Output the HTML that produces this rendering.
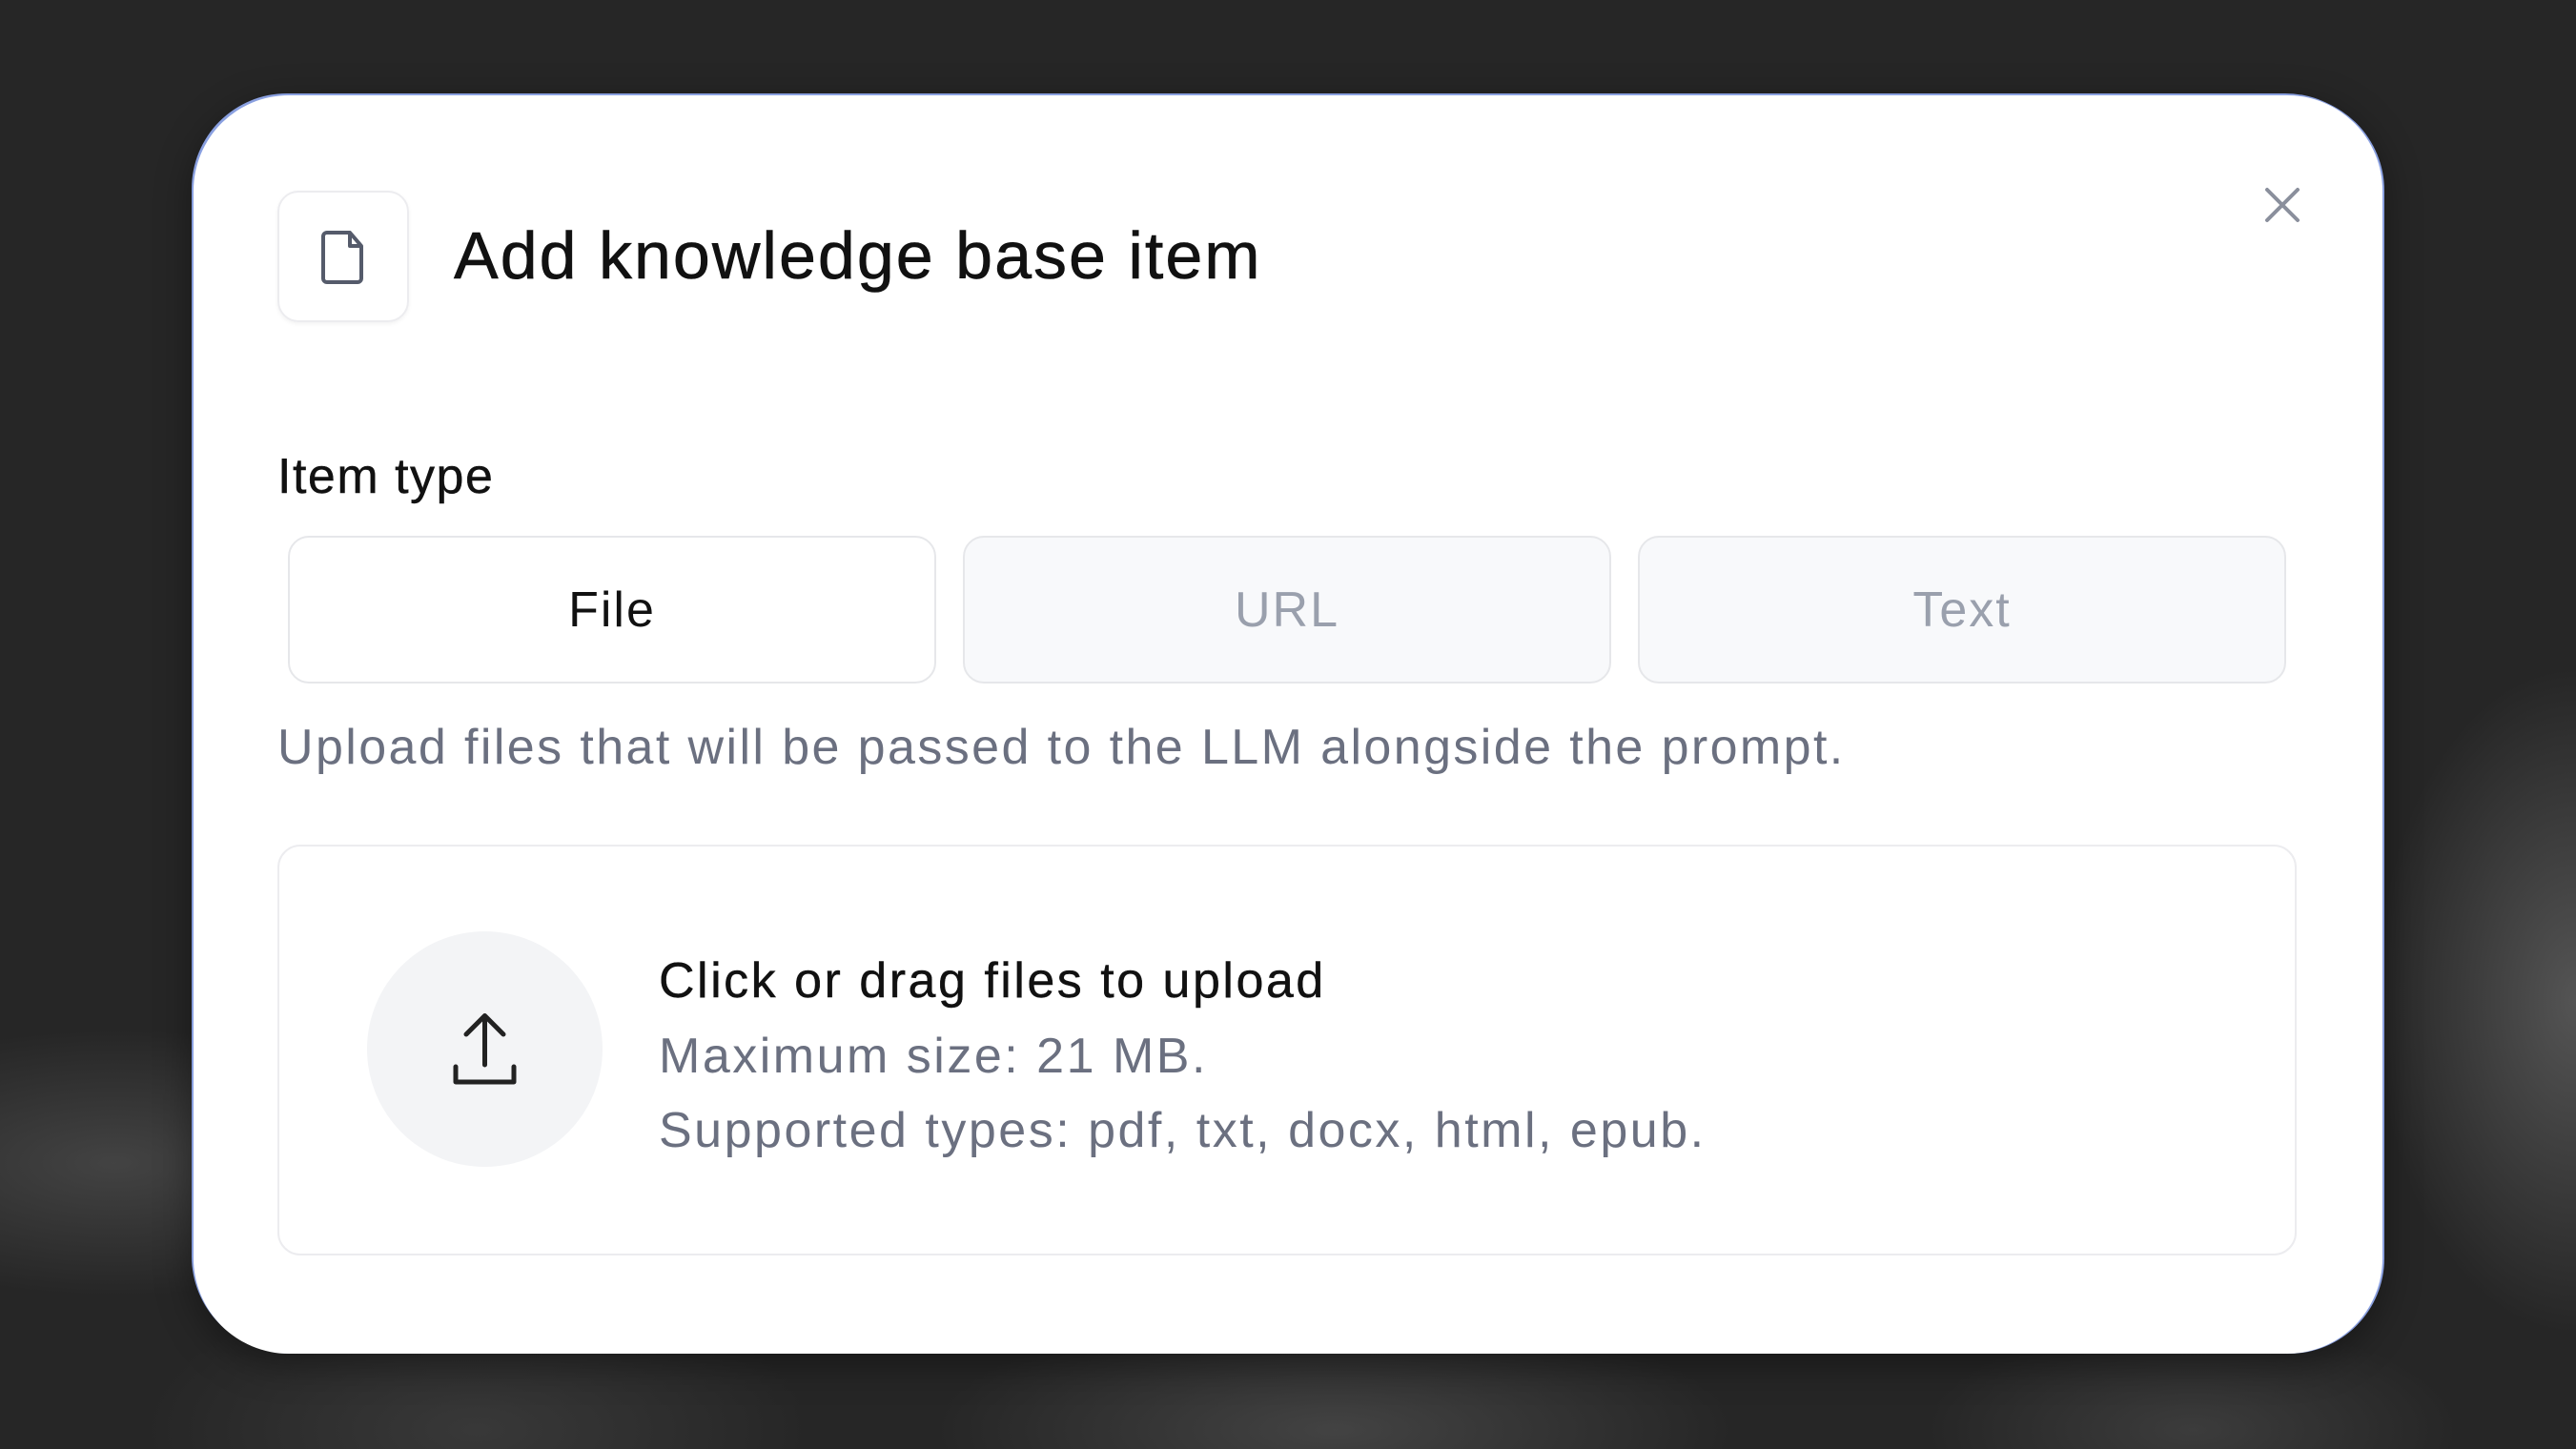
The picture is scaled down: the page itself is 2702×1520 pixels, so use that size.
<!DOCTYPE html>
<html><head><meta charset="utf-8"><style>
html,body{margin:0;padding:0}
body{width:2702px;height:1520px;position:relative;overflow:hidden;background:#262626;font-family:"Liberation Sans",sans-serif;
background-image:
radial-gradient(ellipse 300px 500px at 2702px 1050px,rgba(130,130,130,.5),transparent 70%),
radial-gradient(ellipse 500px 200px at 120px 1220px,rgba(110,110,110,.4),transparent 70%),
radial-gradient(ellipse 600px 180px at 1400px 1500px,rgba(110,110,110,.4),transparent 70%),
radial-gradient(ellipse 400px 160px at 2300px 1500px,rgba(110,110,110,.3),transparent 70%),
radial-gradient(ellipse 500px 220px at 500px 1500px,rgba(90,90,90,.35),transparent 70%);}
.modal{position:absolute;left:203px;top:100px;width:2296px;height:1320px;background:#fff;border-radius:100px;box-shadow:-2px -2px 0 #8aa0e0, 2px 0 0 #8aa0e0,0 10px 40px rgba(0,0,0,.4)}
.icon{position:absolute;left:88px;top:100px;width:134px;height:134px;border:2px solid #ececef;border-radius:22px;box-shadow:0 2px 4px rgba(0,0,0,.05)}
.title{position:absolute;left:273px;top:128px;font-size:70px;color:#111;line-height:80px;letter-spacing:2px;-webkit-text-stroke:0.6px #111}
.close{position:absolute;left:2171px;top:95px}
.label{position:absolute;left:88px;top:370px;font-size:52px;color:#111;line-height:60px;letter-spacing:1.5px;-webkit-text-stroke:0.4px #111}
.btn{position:absolute;top:462px;width:680px;height:155px;border:2px solid #e6e7ea;border-radius:22px;box-sizing:border-box;display:flex;align-items:center;justify-content:center;font-size:52px;letter-spacing:2px}
.desc{position:absolute;left:88px;top:754px;font-size:52px;color:#6b7080;line-height:60px;letter-spacing:2.4px}
.drop{position:absolute;left:88px;top:786px;width:2118px;height:431px;border:2px solid #ececef;border-radius:24px;box-sizing:border-box}
.circle{position:absolute;left:92px;top:89px;width:247px;height:247px;border-radius:50%;background:#f3f4f6}
.t{position:absolute;left:398px;font-size:52px;line-height:60px;white-space:nowrap;letter-spacing:2.5px}
</style></head><body>
<div class="modal">
  <div class="icon"><svg width="134" height="134" viewBox="0 0 134 134" style="position:absolute;left:0;top:0"><path d="M50 42h24l12 14v34a4 4 0 0 1-4 4H50a4 4 0 0 1-4-4V46a4 4 0 0 1 4-4z M74 42v14h12" fill="none" stroke="#555b6b" stroke-width="4" stroke-linejoin="round"/></svg></div>
  <div class="title">Add knowledge base item</div>
  <svg class="close" width="40" height="40" viewBox="0 0 40 40"><path d="M4 4L36 36M36 4L4 36" stroke="#8a8f9c" stroke-width="4" stroke-linecap="round"/></svg>
  <div class="label">Item type</div>
  <div class="btn" style="left:99px;background:#fff;color:#111">File</div>
  <div class="btn" style="left:807px;background:#f8f9fb;color:#9aa0ad">URL</div>
  <div class="btn" style="left:1515px;background:#f8f9fb;color:#9aa0ad">Text</div>
  <div class="desc" style="top:654px">Upload files that will be passed to the LLM alongside the prompt.</div>
  <div class="drop">
    <div class="circle"><svg width="247" height="247" viewBox="0 0 247 247"><path d="M123.5 90v50M104 108l19.5-19.5L143 108M93 142v16h61v-16" fill="none" stroke="#222" stroke-width="5" stroke-linecap="round" stroke-linejoin="round"/></svg></div>
    <div class="t" style="top:111px;color:#111;-webkit-text-stroke:0.4px #111">Click or drag files to upload</div>
    <div class="t" style="top:190px;color:#6b7080">Maximum size: 21 MB.</div>
    <div class="t" style="top:268px;color:#6b7080">Supported types: pdf, txt, docx, html, epub.</div>
  </div>
</div>
</body></html>
